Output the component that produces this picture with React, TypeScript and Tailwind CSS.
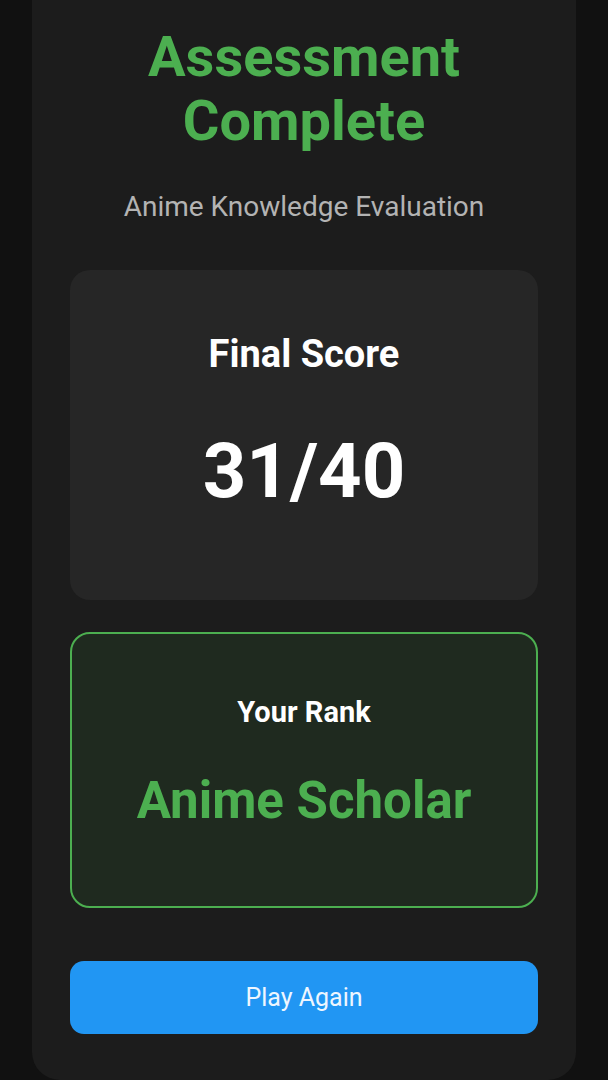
import React from "react";

const font = { fontFamily: "Roboto, 'Noto Sans', sans-serif" };

export default function App() {
  return (
    <div
      className="flex min-h-[1080px] w-full justify-center bg-[#111111]"
      style={font}
    >
      <div className="flex h-[1080px] w-[544px] flex-col items-center rounded-b-[28px] bg-[#1c1c1c] px-[38px] pt-[25px] pb-[46px]">
        <h1 className="text-center text-[56px] leading-[64px] font-bold text-[#4caf50]">
          Assessment
          <br />
          Complete
        </h1>
        <p className="mt-[33px] text-[28px] leading-[42px] text-[#b3b3b3]">
          Anime Knowledge Evaluation
        </p>

        <div className="mt-[42px] flex h-[330px] w-full flex-col items-center rounded-[20px] bg-[#262626] pt-[62px]">
          <h2 className="text-[38px] leading-[44px] font-bold text-white">
            Final Score
          </h2>
          <div className="mt-[57px] text-[76px] leading-[76px] font-bold text-white">
            31/40
          </div>
        </div>

        <div className="mt-[32px] flex h-[276px] w-full flex-col items-center rounded-[20px] border-2 border-[#4caf50] bg-[#1f2a1f] pt-[61px]">
          <h3 className="text-[29px] leading-[34px] font-bold text-white">
            Your Rank
          </h3>
          <div className="mt-[41px] text-[51px] leading-[62px] font-bold text-[#4caf50]">
            Anime Scholar
          </div>
        </div>

        <button className="mt-[53px] h-[73px] w-full rounded-[14px] bg-[#2196f3] text-[25px] text-[#eef6ff]">
          Play Again
        </button>
      </div>
    </div>
  );
}
